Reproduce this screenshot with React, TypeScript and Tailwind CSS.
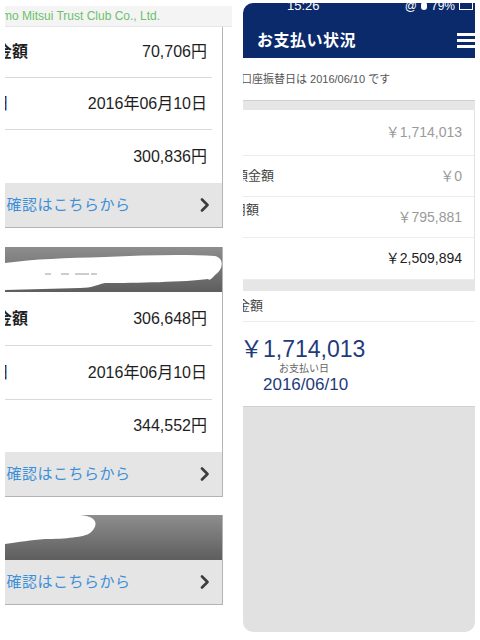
import React from 'react';

const FONT = "font-['Liberation_Sans','Noto_Sans_CJK_JP',sans-serif]";

function Chevron() {
  return (
    <svg width="10" height="14" viewBox="0 0 10 14" className="shrink-0">
      <polyline points="2,1.5 7.5,7 2,12.5" fill="none" stroke="#3d3d3d" strokeWidth="2.6" strokeLinecap="round" strokeLinejoin="round" />
    </svg>
  );
}

function LinkRow() {
  return (
    <div className="flex h-[44px] items-center justify-between bg-[#e5e5e5] pr-[12px]">
      <span className="flex items-center overflow-hidden text-[15px] tracking-[0.5px] text-[#3c8fd8]">
        <span className="-ml-[14px] text-[#3c8fd8]">の</span>確認はこちらから
      </span>
      <Chevron />
    </div>
  );
}

function Row({ label, value, h }: { label: React.ReactNode; value: string; h: string }) {
  return (
    <div className={`flex ${h} items-center justify-between pr-[15px] overflow-hidden`}>
      <span className="text-[16px] font-bold text-[#1e1e1e]">{label}</span>
      <span className="text-[16px] text-[#1e1e1e]">{value}</span>
    </div>
  );
}

function Divider() {
  return <div className="mr-[10px] h-px bg-[#d9d9d9]" />;
}

function ScribbleHeader({ variant }: { variant: 'a' | 'b' }) {
  return (
    <div className="h-[45px] bg-gradient-to-b from-[#8e8e8e] to-[#5e5e5e]">
      {variant === 'a' ? (
        <svg width="218" height="45" viewBox="0 0 218 45">
          <path d="M0 16 C30 12 60 11 100 10 C140 8 180 7 210 9 C219 11 219 22 210 28 C207 31 205 34 203 32 C180 35 130 36 100 36 C90 38 88 41 75 41 L0 43 Z" fill="#fff" />
          <path d="M40 27 L46 27 M56 27 L64 27 M70 27 L84 27 M86 27 L92 27" stroke="#9a9a9a" strokeWidth="1" />
        </svg>
      ) : (
        <svg width="218" height="45" viewBox="0 0 218 45">
          <path d="M0 0 L72 0 C92 0 95 10 85 18 C80 22 60 24 40 24 C25 25 15 27 0 29 Z" fill="#fff" />
        </svg>
      )}
    </div>
  );
}

function LeftColumn() {
  return (
    <div className="ml-[5px] flex w-[227px] flex-col">
      <div className="mt-[6px] flex h-[21px] items-center overflow-hidden border-b border-[#e6e6e6] bg-[#f4f4f4]">
        <span className="-ml-[3px] whitespace-nowrap text-[12px] text-[#6cc06a]">mo Mitsui Trust Club Co., Ltd.</span>
      </div>

      {/* card 1 */}
      <div className="w-[218px] border-r border-b border-[#b3b3b3] bg-white">
        <Row h="h-[50px]" label={<span className="-ml-[9px]">金額</span>} value="70,706円" />
        <Divider />
        <Row h="h-[51px]" label={<span className="-ml-[12px] font-normal">日</span>} value="2016年06月10日" />
        <Divider />
        <Row h="h-[53px]" label="" value="300,836円" />
        <LinkRow />
      </div>

      {/* card 2 */}
      <div className="mt-[19px] w-[218px] border-r border-b border-[#b3b3b3] bg-white">
        <ScribbleHeader variant="a" />
        <Row h="h-[53px]" label={<span className="-ml-[9px]">金額</span>} value="306,648円" />
        <Divider />
        <Row h="h-[53px]" label={<span className="-ml-[12px] font-normal">日</span>} value="2016年06月10日" />
        <Divider />
        <Row h="h-[52px]" label="" value="344,552円" />
        <LinkRow />
      </div>

      {/* card 3 */}
      <div className="mt-[18px] w-[218px] border-r border-b border-[#b3b3b3] bg-white">
        <ScribbleHeader variant="b" />
        <LinkRow />
      </div>
    </div>
  );
}

function RightRow({ label, value, dark, h }: { label?: React.ReactNode; value: string; dark?: boolean; h: string }) {
  return (
    <div className={`flex ${h} items-center justify-between overflow-hidden border-b border-[#ececec] pr-[12px]`}>
      <div className="text-[13px] text-[#444]">{label}</div>
      <span className={`text-[14px] ${dark ? 'text-[#222]' : 'text-[#9a9a9a]'}`}>{value}</span>
    </div>
  );
}

function RightColumn() {
  return (
    <div className="ml-[11px] flex w-[232px] flex-col">
      <div className="mt-[3px] h-[55px] overflow-hidden rounded-tl-[10px] bg-[#0b2a6b]">
        <div className="-mt-[7px] flex items-center justify-between pl-[44px] pr-[2px] text-[12px] text-white">
          <span className="text-[13px]">15:26</span>
          <span className="flex items-center gap-1">
            <span>@</span>
            <span className="h-[8px] w-[6px] rounded-full bg-white" />
            <span>79%</span>
            <span className="h-[8px] w-[14px] border border-white" />
          </span>
        </div>
        <div className="mt-[13px] flex items-center justify-between pl-[14px]">
          <span className="text-[16px] font-bold tracking-[0.5px] text-white">お支払い状況</span>
          <div className="flex w-[18px] flex-col gap-[3px]">
            <div className="h-[3px] bg-white" />
            <div className="h-[3px] bg-white" />
            <div className="h-[3px] bg-white" />
          </div>
        </div>
      </div>

      <div className="flex h-[42px] items-center overflow-hidden bg-white">
        <span className="-ml-[2px] whitespace-nowrap text-[11px] text-[#555]">口座振替日は 2016/06/10 です</span>
      </div>
      <div className="h-[10px] border-t border-[#cfcfcf] bg-[#e6e6e6]" />

      <div className="border-r border-[#e2e2e2] bg-white">
        <RightRow h="h-[46px]" value="￥1,714,013" />
        <RightRow h="h-[41px]" label={<span className="-ml-[8px]">預金額</span>} value="￥0" />
        <RightRow
          h="h-[41px]"
          label={
            <div className="flex flex-col leading-[14px]">
              <span className="-ml-[10px]">用額</span>
              <span className="-ml-[4px] text-[9px] text-[#aaa]">)</span>
            </div>
          }
          value="￥795,881"
        />
        <RightRow h="h-[42px]" value="￥2,509,894" dark />
      </div>
      <div className="h-[11px] bg-[#e6e6e6]" />

      <div className="bg-white">
        <div className="flex h-[31px] items-center overflow-hidden border-b border-[#ececec]">
          <span className="-ml-[6px] text-[13px] text-[#444]">金額</span>
        </div>
        <div className="flex h-[84px] flex-col pt-[14px]">
          <span className="-ml-[3px] text-[23px] leading-[26px] text-[#1f3b7c]">￥1,714,013</span>
          <span className="ml-[36px] text-[10px] leading-[13px] text-[#666]">お支払い日</span>
          <span className="ml-[20px] text-[17px] leading-[20px] text-[#1f3b7c]">2016/06/10</span>
        </div>
      </div>
      <div className="h-[226px] rounded-b-[10px] border-t border-[#d0d0d0] bg-[#e1e1e1]" />
    </div>
  );
}

export default function App() {
  return (
    <div className={`flex h-[640px] w-[480px] overflow-hidden bg-white ${FONT}`}>
      <LeftColumn />
      <RightColumn />
    </div>
  );
}
